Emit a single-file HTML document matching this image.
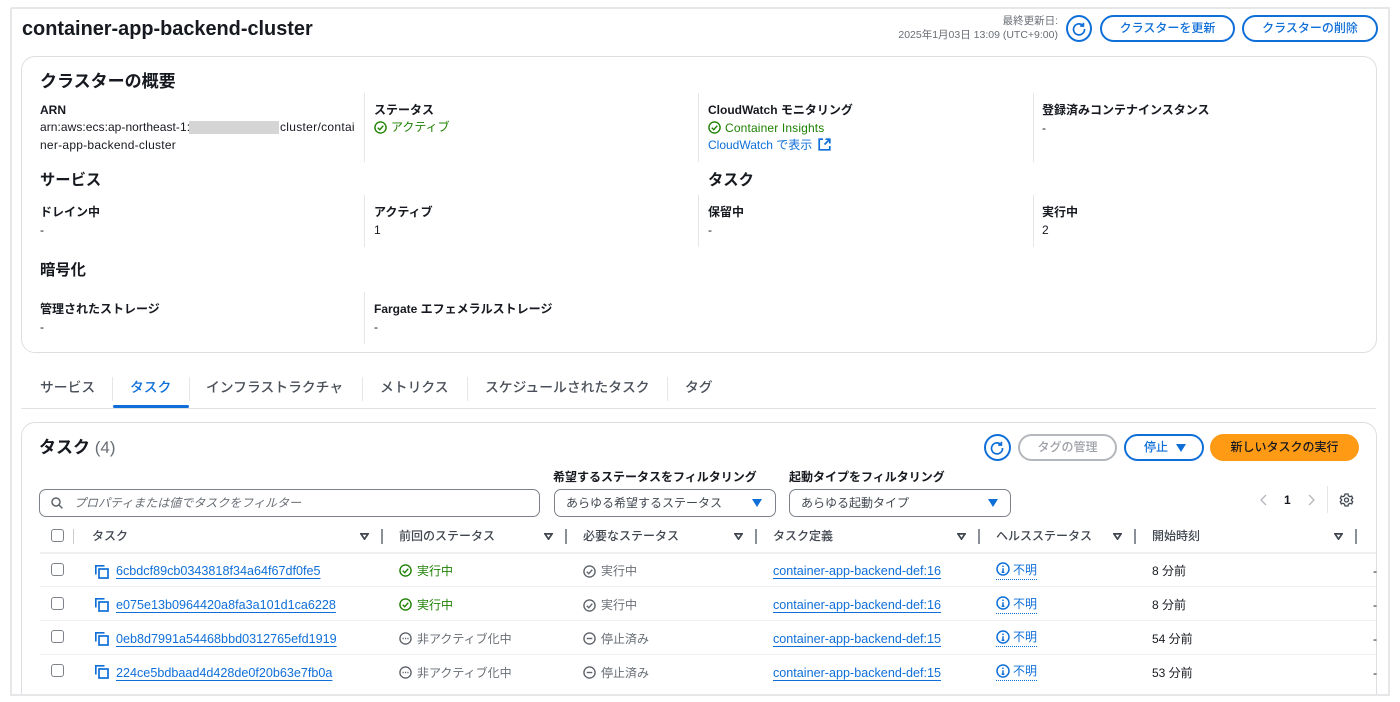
<!DOCTYPE html>
<html lang="ja"><head><meta charset="utf-8"><style>
*{box-sizing:border-box}
html,body{margin:0;padding:0;width:1400px;height:702px;overflow:hidden;background:#fff}
body{font-family:"Liberation Sans","Noto Sans CJK JP",sans-serif;color:#16191f;position:relative;font-size:12px}
.a{position:absolute;white-space:nowrap;line-height:16px}
.b{font-weight:700}
.h{font-size:15.3px;font-weight:700;line-height:20px}
.box{position:absolute;background:#fff}
.v{position:absolute;width:1px;background:#e4e6e9}
.btn{position:absolute;border:2px solid #0f6fd8;border-radius:15px;color:#0f6fd8;font-weight:500;font-size:12px;text-align:center;background:#fff;white-space:nowrap}
.th{color:#414750;font-weight:500;font-size:12px}
.tl{position:absolute;width:1.5px;background:#8b9098;height:15px;top:529px}
.rl{position:absolute;left:40px;width:1336px;height:1px;background:#eeeff1}
.lk{color:#0f6fd8;text-decoration:underline;text-underline-offset:3px;font-size:12.6px}
.g{color:#1d8102}.gr{color:#686e75}.bl{color:#0f6fd8}
svg{position:absolute;overflow:visible}
.tab{position:absolute;top:379px;font-size:13.8px;font-weight:500;color:#4a5059;line-height:18px;white-space:nowrap}
.sep{position:absolute;top:377px;height:24px;width:1px;background:#e4e6e9}
.cb{position:absolute;left:51px;width:13px;height:13px;border:1.5px solid #7d8289;border-radius:3px;background:#fff}
.sel{position:absolute;top:489px;height:28px;border:1.5px solid #7d8289;border-radius:7px;background:#fff;padding:5px 11px;line-height:17px;color:#414750;font-size:12px}
.tri{position:absolute;width:0;height:0;border-left:5px solid transparent;border-right:5px solid transparent;border-top:8px solid #0f6fd8}
</style></head><body>
<svg width="0" height="0" style="position:absolute"><defs>
<symbol id="ok" viewBox="0 0 14 14"><circle cx="7" cy="7" r="6" fill="none" stroke="currentColor" stroke-width="1.5"/><path d="M4 7.2l2.2 2.2L10 5" fill="none" stroke="currentColor" stroke-width="1.5"/></symbol>
<symbol id="dots" viewBox="0 0 14 14"><circle cx="7" cy="7" r="6" fill="none" stroke="currentColor" stroke-width="1.5"/><path d="M3.8 7h1.3M6.4 7h1.3M9 7h1.3" fill="none" stroke="currentColor" stroke-width="1.5"/></symbol>
<symbol id="minus" viewBox="0 0 14 14"><circle cx="7" cy="7" r="6" fill="none" stroke="currentColor" stroke-width="1.5"/><path d="M4 7h6" fill="none" stroke="currentColor" stroke-width="1.5"/></symbol>
<symbol id="info" viewBox="0 0 14 14"><circle cx="7" cy="7" r="6" fill="none" stroke="currentColor" stroke-width="1.5"/><path d="M7 6.2v4M5.6 10.2h2.8M7 3.6v1.4" fill="none" stroke="currentColor" stroke-width="1.5"/></symbol>
<symbol id="copy" viewBox="0 0 14 14"><path d="M.8 9.500V.8h8.700" fill="none" stroke="currentColor" stroke-width="1.7"/><rect x="4" y="4" width="9" height="9" fill="none" stroke="currentColor" stroke-width="1.7"/></symbol>
<symbol id="refresh" viewBox="0 0 14 14"><path d="M10.800 3.400A5.500 5.500 0 1 0 12.500 7" fill="none" stroke="currentColor" stroke-width="1.700"/><path d="M11.400 .8v3.200H8.200" fill="none" stroke="currentColor" stroke-width="1.700"/></symbol>
<symbol id="fil" viewBox="0 0 10 8"><path d="M1 1h8L5 7z" fill="none" stroke="#414750" stroke-width="1.900"/></symbol>
</defs></svg>

<div class="box" style="left:10px;top:7px;width:1380px;height:689px;border:2px solid #e6e7e9;border-radius:2px"></div>
<div class="a b" style="left:22px;top:15px;font-size:19.9px;line-height:28px;color:#16191f">container-app-backend-cluster</div>

<div class="a gr" style="right:342px;top:14px;font-size:10.5px;line-height:14px;text-align:right">最終更新日:</div>
<div class="a gr" style="right:342px;top:28px;font-size:10.5px;line-height:14px">2025年1月03日 13:09 (UTC+9:00)</div>
<div class="box" style="left:1066px;top:15px;width:26px;height:27px;border:2px solid #0f6fd8;border-radius:50%"></div>
<svg style="left:1072px;top:22px;color:#0f6fd8" width="14" height="14"><use href="#refresh"/></svg>
<div class="btn" style="left:1100px;top:15px;width:135px;height:27px;line-height:23px">クラスターを更新</div>
<div class="btn" style="left:1242px;top:15px;width:136px;height:27px;line-height:23px">クラスターの削除</div>

<div class="box" style="left:21px;top:56px;width:1356px;height:297px;border:1px solid #dcdee1;border-radius:14px"></div>
<div class="a" style="left:40px;top:72px;font-size:17px;font-weight:700;line-height:20px">クラスターの概要</div>

<div class="v" style="left:364px;top:93px;height:69px"></div>
<div class="v" style="left:698px;top:93px;height:69px"></div>
<div class="v" style="left:1033px;top:93px;height:69px"></div>
<div class="a b" style="left:40px;top:102px">ARN</div>
<div class="a" style="left:40px;top:119px;letter-spacing:.05px">arn:aws:ecs:ap-northeast-1:</div>
<div class="box" style="left:189px;top:121px;width:90px;height:13px;background:#d5d5d5"></div>
<div class="a" style="left:280px;top:119px;letter-spacing:.3px">cluster/contai</div>
<div class="a" style="left:40px;top:137px;letter-spacing:.26px">ner-app-backend-cluster</div>
<div class="a b" style="left:374px;top:102px">ステータス</div>
<svg style="left:374px;top:121px;color:#1d8102" width="13" height="13"><use href="#ok"/></svg>
<div class="a g" style="left:391px;top:119px">アクティブ</div>
<div class="a b" style="left:708px;top:102px">CloudWatch モニタリング</div>
<svg style="left:708px;top:121px;color:#1d8102" width="13" height="13"><use href="#ok"/></svg>
<div class="a g" style="left:725px;top:120px;letter-spacing:.15px">Container Insights</div>
<div class="a bl" style="left:708px;top:137px">CloudWatch で表示</div>
<svg style="left:818px;top:138px;color:#0f6fd8" width="13" height="13" viewBox="0 0 13 13"><path d="M5 1.200H1.200v10.600h10.600V8M7.500 1.200h4.300v4.300M11.500 1.500L6.500 6.500" fill="none" stroke="currentColor" stroke-width="1.700"/></svg>
<div class="a b" style="left:1042px;top:102px">登録済みコンテナインスタンス</div>
<div class="a" style="left:1042px;top:120px">-</div>

<div class="a h" style="left:40px;top:171px">サービス</div>
<div class="a h" style="left:708px;top:171px">タスク</div>
<div class="v" style="left:364px;top:195px;height:52px"></div>
<div class="v" style="left:698px;top:195px;height:52px"></div>
<div class="v" style="left:1033px;top:195px;height:52px"></div>
<div class="a b" style="left:40px;top:204px">ドレイン中</div><div class="a" style="left:40px;top:222px">-</div>
<div class="a b" style="left:374px;top:204px">アクティブ</div><div class="a" style="left:374px;top:222px">1</div>
<div class="a b" style="left:708px;top:204px">保留中</div><div class="a" style="left:708px;top:222px">-</div>
<div class="a b" style="left:1042px;top:204px">実行中</div><div class="a" style="left:1042px;top:222px">2</div>

<div class="a h" style="left:40px;top:261px">暗号化</div>
<div class="v" style="left:364px;top:292px;height:52px"></div>
<div class="a b" style="left:40px;top:301px">管理されたストレージ</div><div class="a" style="left:40px;top:319px">-</div>
<div class="a b" style="left:374px;top:301px">Fargate エフェメラルストレージ</div><div class="a" style="left:374px;top:319px">-</div>

<div class="tab" style="left:40px">サービス</div>
<div class="sep" style="left:112px"></div>
<div class="tab" style="left:130px;color:#0f6fd8">タスク</div>
<div class="sep" style="left:189px"></div>
<div class="tab" style="left:206px">インフラストラクチャ</div>
<div class="sep" style="left:362px"></div>
<div class="tab" style="left:380px">メトリクス</div>
<div class="sep" style="left:467px"></div>
<div class="tab" style="left:485px">スケジュールされたタスク</div>
<div class="sep" style="left:667px"></div>
<div class="tab" style="left:685px">タグ</div>
<div class="box" style="left:21px;top:408px;width:1355px;height:1px;background:#dfe1e4"></div>
<div class="box" style="left:113px;top:405px;width:76px;height:3px;background:#0f6fd8;border-radius:2px"></div>

<div class="box" style="left:21px;top:422px;width:1356px;height:290px;border:1px solid #dcdee1;border-radius:14px"></div>
<div class="a" style="left:39px;top:437px;font-size:17px;font-weight:700;line-height:22px">タスク <span style="font-weight:400;color:#686e75">(4)</span></div>

<div class="box" style="left:984px;top:434px;width:27px;height:27px;border:2px solid #0f6fd8;border-radius:50%"></div>
<svg style="left:990px;top:441px;color:#0f6fd8" width="14" height="14"><use href="#refresh"/></svg>
<div class="btn" style="left:1018px;top:434px;width:99px;height:27px;line-height:23px;border-color:#b4b7bb;color:#9ea2a8">タグの管理</div>
<div class="btn" style="left:1124px;top:434px;width:80px;height:27px;line-height:23px;text-align:left;padding-left:18px">停止</div>
<div class="tri" style="left:1176px;top:444px"></div>
<div class="btn" style="left:1210px;top:434px;width:149px;height:27px;line-height:27px;border:0;background:#ff9a15;color:#16191f">新しいタスクの実行</div>

<div class="a b" style="left:553px;top:469px">希望するステータスをフィルタリング</div>
<div class="a b" style="left:789px;top:469px">起動タイプをフィルタリング</div>
<div class="box" style="left:39px;top:489px;width:501px;height:28px;border:1.5px solid #7d8289;border-radius:7px"></div>
<svg style="left:51px;top:497px" width="12" height="12" viewBox="0 0 12 12"><circle cx="5" cy="5" r="4" fill="none" stroke="#5f646b" stroke-width="1.5"/><path d="M8 8l3.4 3.4" stroke="#5f646b" stroke-width="1.5"/></svg>
<div class="a gr" style="left:74px;top:495px;font-style:italic">プロパティまたは値でタスクをフィルター</div>
<div class="sel" style="left:554px;width:222px">あらゆる希望するステータス</div><div class="tri" style="left:752px;top:499px"></div>
<div class="sel" style="left:789px;width:222px">あらゆる起動タイプ</div><div class="tri" style="left:988px;top:499px"></div>
<svg style="left:1258px;top:494px" width="10" height="12" viewBox="0 0 10 12"><path d="M8 1L3 6l5 5" fill="none" stroke="#b4b7bb" stroke-width="1.3"/></svg>
<div class="a b" style="left:1284px;top:492px">1</div>
<svg style="left:1307px;top:494px" width="10" height="12" viewBox="0 0 10 12"><path d="M2 1l5 5-5 5" fill="none" stroke="#b4b7bb" stroke-width="1.3"/></svg>
<div class="v" style="left:1327px;top:486px;height:27px"></div>
<svg style="left:1340px;top:493px" width="13" height="14" viewBox="0 0 13 14"><path d="M5 1h3l.4 1.8 1.6.9 1.7-.6 1 2.3-1.3 1.1v1l1.3 1.1-1 2.3-1.7-.6-1.6.9L8 13H5l-.4-1.8-1.6-.9-1.7.6-1-2.3L1.600 7.500v-1L.3 5.400l1-2.300 1.700.6 1.600-.9z" fill="none" stroke="#414750" stroke-width="1.3"/><circle cx="6.500" cy="7" r="2" fill="none" stroke="#414750" stroke-width="1.300"/></svg>

<div class="cb" style="top:529px"></div>
<div class="v" style="left:73px;top:529px;height:15px;background:#c9cbcf"></div>
<div class="a th" style="left:92px;top:528px">タスク</div>
<svg style="left:360px;top:533px" width="9" height="7" viewBox="0 0 10 8" preserveAspectRatio="none"><use href="#fil"/></svg><div class="tl" style="left:381px"></div>
<div class="a th" style="left:399px;top:528px">前回のステータス</div>
<svg style="left:544px;top:533px" width="9" height="7" viewBox="0 0 10 8" preserveAspectRatio="none"><use href="#fil"/></svg><div class="tl" style="left:565px"></div>
<div class="a th" style="left:583px;top:528px">必要なステータス</div>
<svg style="left:734px;top:533px" width="9" height="7" viewBox="0 0 10 8" preserveAspectRatio="none"><use href="#fil"/></svg><div class="tl" style="left:755px"></div>
<div class="a th" style="left:773px;top:528px">タスク定義</div>
<svg style="left:957px;top:533px" width="9" height="7" viewBox="0 0 10 8" preserveAspectRatio="none"><use href="#fil"/></svg><div class="tl" style="left:978px"></div>
<div class="a th" style="left:996px;top:528px">ヘルスステータス</div>
<svg style="left:1113px;top:533px" width="9" height="7" viewBox="0 0 10 8" preserveAspectRatio="none"><use href="#fil"/></svg><div class="tl" style="left:1134px"></div>
<div class="a th" style="left:1152px;top:528px">開始時刻</div>
<svg style="left:1334px;top:533px" width="9" height="7" viewBox="0 0 10 8" preserveAspectRatio="none"><use href="#fil"/></svg><div class="tl" style="left:1355px"></div>
<div class="rl" style="top:552px;height:2px"></div>
<div class="rl" style="top:586px"></div>
<div class="rl" style="top:620px"></div>
<div class="rl" style="top:654px"></div>

<div class="cb" style="top:563px"></div>
<svg style="left:95px;top:565px;color:#0f6fd8" width="14" height="14"><use href="#copy"/></svg>
<div class="a lk" style="left:116px;top:563px">6cbdcf89cb0343818f34a64f67df0fe5</div>
<svg style="left:399px;top:564px;color:#1d8102" width="13" height="13"><use href="#ok"/></svg>
<div class="a g" style="left:417px;top:563px">実行中</div>
<svg style="left:583px;top:565px;color:#5f646b" width="13" height="13"><use href="#ok"/></svg>
<div class="a gr" style="left:601px;top:563px">実行中</div>
<div class="a lk" style="left:773px;top:563px">container-app-backend-def:16</div>
<svg style="left:996px;top:562px;color:#0f6fd8" width="14" height="14"><use href="#info"/></svg>
<div class="a bl" style="top:562px;border-bottom:1px dotted #0f6fd8;height:18px;left:996px;padding-left:17px">不明</div>
<div class="a" style="left:1152px;top:563px">8 分前</div>

<div class="cb" style="top:597px"></div>
<svg style="left:95px;top:598px;color:#0f6fd8" width="14" height="14"><use href="#copy"/></svg>
<div class="a lk" style="left:116px;top:597px">e075e13b0964420a8fa3a101d1ca6228</div>
<svg style="left:399px;top:598px;color:#1d8102" width="13" height="13"><use href="#ok"/></svg>
<div class="a g" style="left:417px;top:597px">実行中</div>
<svg style="left:583px;top:599px;color:#5f646b" width="13" height="13"><use href="#ok"/></svg>
<div class="a gr" style="left:601px;top:597px">実行中</div>
<div class="a lk" style="left:773px;top:597px">container-app-backend-def:16</div>
<svg style="left:996px;top:596px;color:#0f6fd8" width="14" height="14"><use href="#info"/></svg>
<div class="a bl" style="top:596px;border-bottom:1px dotted #0f6fd8;height:18px;left:996px;padding-left:17px">不明</div>
<div class="a" style="left:1152px;top:597px">8 分前</div>

<div class="cb" style="top:630px"></div>
<svg style="left:95px;top:632px;color:#0f6fd8" width="14" height="14"><use href="#copy"/></svg>
<div class="a lk" style="left:116px;top:631px">0eb8d7991a54468bbd0312765efd1919</div>
<svg style="left:399px;top:632px;color:#5f646b" width="13" height="13"><use href="#dots"/></svg>
<div class="a gr" style="left:417px;top:631px">非アクティブ化中</div>
<svg style="left:583px;top:632px;color:#5f646b" width="13" height="13"><use href="#minus"/></svg>
<div class="a gr" style="left:601px;top:631px">停止済み</div>
<div class="a lk" style="left:773px;top:631px">container-app-backend-def:15</div>
<svg style="left:996px;top:630px;color:#0f6fd8" width="14" height="14"><use href="#info"/></svg>
<div class="a bl" style="top:629px;border-bottom:1px dotted #0f6fd8;height:18px;left:996px;padding-left:17px">不明</div>
<div class="a" style="left:1152px;top:631px">54 分前</div>

<div class="cb" style="top:664px"></div>
<svg style="left:95px;top:665px;color:#0f6fd8" width="14" height="14"><use href="#copy"/></svg>
<div class="a lk" style="left:116px;top:665px">224ce5bdbaad4d428de0f20b63e7fb0a</div>
<svg style="left:399px;top:666px;color:#5f646b" width="13" height="13"><use href="#dots"/></svg>
<div class="a gr" style="left:417px;top:665px">非アクティブ化中</div>
<svg style="left:583px;top:666px;color:#5f646b" width="13" height="13"><use href="#minus"/></svg>
<div class="a gr" style="left:601px;top:665px">停止済み</div>
<div class="a lk" style="left:773px;top:665px">container-app-backend-def:15</div>
<svg style="left:996px;top:664px;color:#0f6fd8" width="14" height="14"><use href="#info"/></svg>
<div class="a bl" style="top:663px;border-bottom:1px dotted #0f6fd8;height:18px;left:996px;padding-left:17px">不明</div>
<div class="a" style="left:1152px;top:665px">53 分前</div>

<div class="a" style="left:1373px;top:563px">-</div>
<div class="a" style="left:1373px;top:597px">-</div>
<div class="a" style="left:1373px;top:631px">-</div>
<div class="a" style="left:1373px;top:665px">-</div>
<div class="box" style="left:0;top:696px;width:1400px;height:6px"></div>
<div class="box" style="left:1390px;top:0;width:10px;height:702px"></div>
<div class="box" style="left:10px;top:694px;width:1380px;height:2px;background:#e6e7e9"></div>
<div class="box" style="left:1388px;top:7px;width:2px;height:689px;background:#e6e7e9"></div>
</body></html>
